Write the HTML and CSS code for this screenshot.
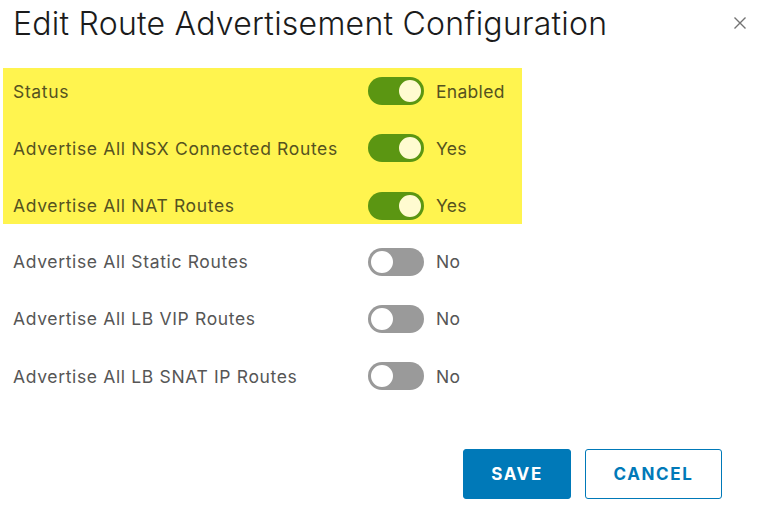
FILE: index.html
```html
<!DOCTYPE html>
<html>
<head>
<meta charset="utf-8">
<link rel="stylesheet" href="styles.css">
</head>
<body>
<div class="modal">
  <div class="header">
    <h1 class="title">Edit Route Advertisement Configuration</h1>
    <svg class="close" width="14" height="14" viewBox="0 0 14 14"><path d="M1.5 1.5 L12.5 12.5 M12.5 1.5 L1.5 12.5" stroke="#737373" stroke-width="1.4" fill="none"/></svg>
  </div>
  <div class="highlight">
    <div class="row">
      <span class="label">Status</span>
      <span class="toggle on"><span class="thumb"></span></span>
      <span class="value">Enabled</span>
    </div>
    <div class="row">
      <span class="label">Advertise All NSX Connected Routes</span>
      <span class="toggle on"><span class="thumb"></span></span>
      <span class="value">Yes</span>
    </div>
    <div class="row">
      <span class="label">Advertise All NAT Routes</span>
      <span class="toggle on"><span class="thumb"></span></span>
      <span class="value">Yes</span>
    </div>
  </div>
  <div class="plain">
    <div class="row">
      <span class="label">Advertise All Static Routes</span>
      <span class="toggle off"><span class="thumb"></span></span>
      <span class="value">No</span>
    </div>
    <div class="row">
      <span class="label">Advertise All LB VIP Routes</span>
      <span class="toggle off"><span class="thumb"></span></span>
      <span class="value">No</span>
    </div>
    <div class="row">
      <span class="label">Advertise All LB SNAT IP Routes</span>
      <span class="toggle off"><span class="thumb"></span></span>
      <span class="value">No</span>
    </div>
  </div>
  <div class="footer">
    <button class="btn primary">SAVE</button>
    <button class="btn outline">CANCEL</button>
  </div>
</div>
</body>
</html>
```
FILE: styles.css
```css
html, body {
  margin: 0;
  padding: 0;
  background: #ffffff;
}
.modal {
  width: 768px;
  height: 509px;
  font-family: "Inter", "Lato", sans-serif;
  color: #565656;
}
.header {
  display: flex;
  align-items: center;
  justify-content: space-between;
  padding: 3px 21px 0 13px;
  height: 40px;
}
.title {
  margin: 0;
  font-weight: 300;
  font-size: 32px;
  color: #1b1b1b;
  letter-spacing: 0.25px;
  white-space: nowrap;
}
.close {
  display: block;
  flex: none;
}
.highlight {
  margin: 25px 0 0 3px;
  width: 509px;
  padding: 9px 0 4px 10px;
  background: #fff44f;
  display: flex;
  flex-direction: column;
  gap: 29.33px;
  color: #55521f;
}
.plain {
  margin: 24px 0 0 13px;
  display: flex;
  flex-direction: column;
  gap: 29.33px;
}
.row {
  display: flex;
  align-items: center;
  height: 28px;
  font-size: 17.5px;
  letter-spacing: 0.65px;
  white-space: nowrap;
}
.label {
  width: 355px;
  flex: none;
}
.toggle {
  position: relative;
  width: 56px;
  height: 28px;
  border-radius: 14px;
  box-sizing: border-box;
  flex: none;
}
.toggle.on {
  background: #5b9612;
}
.toggle.off {
  background: #9a9a9a;
}
.thumb {
  position: absolute;
  top: 1px;
  width: 26px;
  height: 26px;
  border-radius: 50%;
  background: #ffffff;
  box-sizing: border-box;
}
.toggle.on .thumb {
  right: 1px;
  border: 2px solid #5b9612;
  background: #fffbd0;
}
.toggle.off .thumb {
  left: 1px;
  border: 2px solid #9a9a9a;
}
.value {
  margin-left: 12px;
  letter-spacing: 0.3px;
}
.footer {
  display: flex;
  gap: 14px;
  margin: 59px 0 0 463px;
}
.btn {
  height: 50px;
  border-radius: 3px;
  font-family: "Inter", sans-serif;
  font-weight: 700;
  font-size: 17px;
  letter-spacing: 1.6px;
  box-sizing: border-box;
  padding: 0;
}
.primary {
  width: 108px;
  background: #0079b8;
  color: #ffffff;
  border: 1px solid #0079b8;
}
.outline {
  width: 137px;
  background: #ffffff;
  color: #0079b8;
  border: 1px solid #0079b8;
}
```
